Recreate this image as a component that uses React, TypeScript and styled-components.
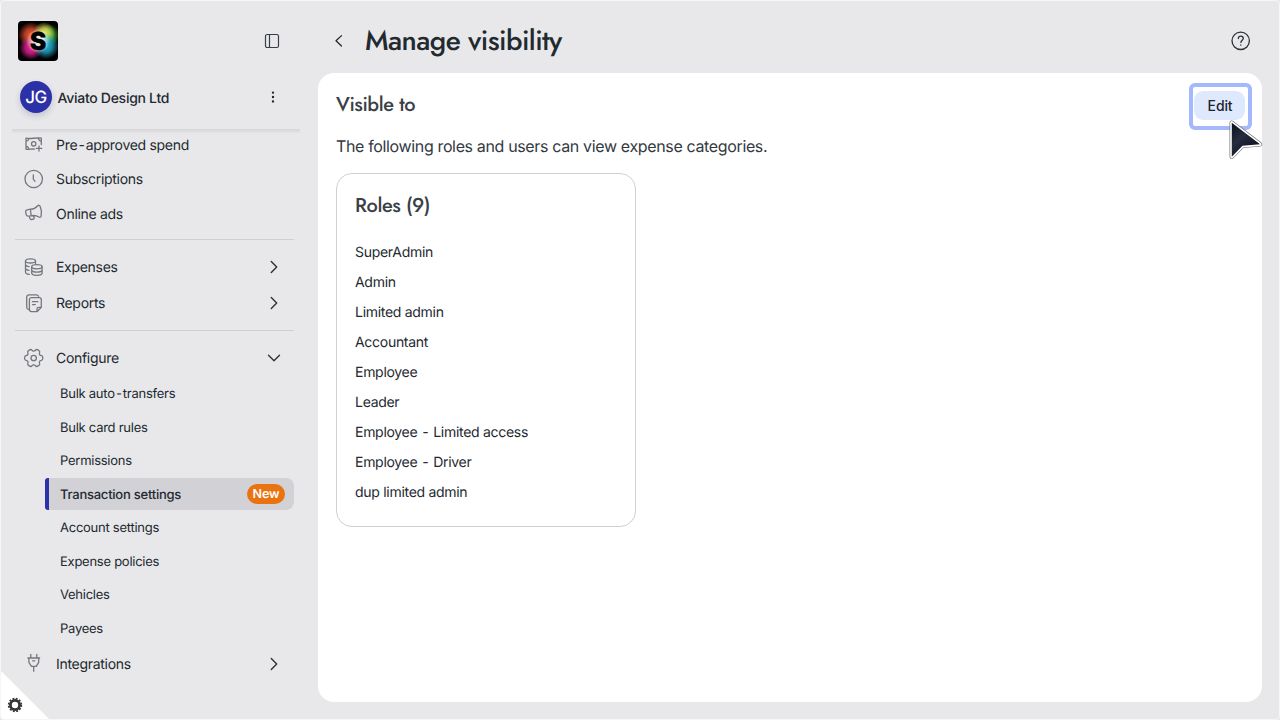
import React from "react";
import styled, { createGlobalStyle, css } from "styled-components";

const Global = createGlobalStyle`
  * { box-sizing: border-box; }
  body {
    margin: 0;
    background: #e8e8ea;
    color: #22292f;
    font-family: Inter, "Liberation Sans", sans-serif;
    text-rendering: geometricPrecision;
  }
`;

const Page = styled.div`
  position: relative;
  display: flex;
  width: 1280px;
  height: 720px;
  overflow: hidden;
  background: #e8e8ea;
  border: 1px solid #f6f6f7;
  border-radius: 4px;
`;

const Sidebar = styled.aside`
  width: 317px;
  display: flex;
  flex-direction: column;
`;

const Brand = styled.div`
  display: flex;
  justify-content: space-between;
  align-items: center;
  height: 40px;
  margin: 20px 38px 0 17px;
`;

const Logo = styled.svg`
  display: block;
  width: 40px;
  height: 40px;
  border-radius: 4px;
`;

const LogoLetter = styled.text`
  font-family: Inter, sans-serif;
  font-weight: 900;
  font-size: 25px;
`;

const Account = styled.div`
  display: flex;
  align-items: center;
  height: 32px;
  margin: 20px 38px 14.5px 19px;
`;

const Avatar = styled.div`
  width: 32px;
  height: 32px;
  padding-top: 1px;
  border-radius: 50%;
  background: #2c31a8;
  color: #fff;
  display: flex;
  align-items: center;
  justify-content: center;
  font-size: 17px;
  font-weight: 500;
  letter-spacing: -0.4px;
  box-shadow: 0 3px 6px rgba(40, 45, 90, 0.2);
`;

const AccountName = styled.div`
  flex: 1;
  margin: 4px 0 0 5.5px;
  font-size: 14px;
  font-weight: 500;
  line-height: 20px;
  letter-spacing: -0.28px;
`;

const Nav = styled.nav`
  position: relative;
  flex: 1;
`;

const ScrollShadow = styled.div`
  position: absolute;
  top: 1px;
  left: 11px;
  width: 288px;
  height: 4px;
  background: linear-gradient(#d8d8da, #dcdcde 50%, #e5e5e7);
`;

const Row = styled.div<{ $h?: number }>`
  display: flex;
  align-items: center;
  height: ${(p) => p.$h ?? 36}px;
  padding: 0 36px 0 22px;
`;

const RowLabel = styled.span`
  flex: 1;
  margin-left: 12px;
  padding-top: 2px;
  font-size: 14px;
  line-height: 20px;
  letter-spacing: -0.3px;
  white-space: nowrap;
`;

const Divider = styled.div<{ $above: number }>`
  height: 1px;
  margin: ${(p) => p.$above}px 24px 9px 14px;
  background: #cfcfd2;
`;

const SubList = styled.div`
  display: flex;
  flex-direction: column;
  gap: 1.5px;
  padding: 1px 0 2px;
`;

const Sub = styled.div<{ $active?: boolean }>`
  display: flex;
  align-items: center;
  justify-content: space-between;
  height: 32px;
  margin: 0 24px 0 44px;
  padding: 0 9px 0 11px;
  border-left: 4px solid transparent;
  border-radius: 3px 8px 8px 3px;
  font-size: 13px;
  letter-spacing: -0.26px;
  white-space: nowrap;
  ${(p) =>
    p.$active &&
    css`
      background: #d2d1d6;
      border-left-color: #2c31a8;
      font-weight: 500;
      letter-spacing: -0.24px;
    `}
`;

const SubLabel = styled.span`
  padding-top: 2px;
`;

const Badge = styled.span`
  width: 38px;
  height: 20px;
  border-radius: 10px;
  background: #e8730f;
  color: #fff;
  font-size: 12.5px;
  font-weight: 600;
  letter-spacing: -0.1px;
  line-height: 21px;
  text-align: center;
`;

const Dash = styled.span`
  padding: 0 1.2px;
`;

const Icon = styled.svg<{ $c?: string; $w?: number; $up?: number }>`
  display: block;
  flex: none;
  fill: none;
  stroke: ${(p) => p.$c ?? "#73777e"};
  stroke-width: ${(p) => p.$w ?? 1.3};
  stroke-linecap: round;
  stroke-linejoin: round;
  margin-bottom: ${(p) => (p.$up ?? 0) * 2}px;
`;

const Main = styled.main`
  width: 944px;
  display: flex;
  flex-direction: column;
`;

const TitleBar = styled.header`
  display: flex;
  align-items: center;
  height: 72px;
  padding: 8px 11px 0 11px;
`;

const Title = styled.h1`
  flex: 1;
  margin: 0 0 0 16px;
  font-family: Jost, Lato, sans-serif;
  font-size: 28px;
  line-height: 40px;
  font-weight: 500;
  letter-spacing: -0.56px;
`;

const Card = styled.section`
  height: 629px;
  padding: 10px 18px;
  background: #fff;
  border-radius: 16px;
`;

const CardHeader = styled.div`
  display: flex;
  justify-content: space-between;
  height: 47px;
  margin-right: -8px;
`;

const Heading = styled.h2`
  margin: 0;
  font-family: Jost, Lato, sans-serif;
  font-size: 20px;
  line-height: 24px;
  font-weight: 500;
  color: #3b3f46;
  letter-spacing: -0.4px;
`;

const CardHeading = styled(Heading)`
  margin-top: 10px;
`;

const FocusRing = styled.div`
  width: 63px;
  height: 47px;
  padding: 4px 2px 6px 1px;
  border: 4px solid #a4b9fd;
  border-radius: 6px;
`;

const EditButton = styled.button`
  display: block;
  width: 51px;
  height: 29px;
  padding: 0 0 0 1px;
  border: 0;
  border-radius: 9px;
  background: #dfe9fe;
  color: #1d242b;
  font: 500 14px/29px Inter, sans-serif;
  letter-spacing: -0.15px;
`;

const Intro = styled.p`
  margin: 4px 0 15px;
  font-size: 16px;
  line-height: 24px;
  letter-spacing: -0.355px;
  color: #33393f;
  white-space: nowrap;
`;

const RolesCard = styled.div`
  width: 300px;
  height: 354px;
  padding: 20px 18px;
  border: 1px solid #d0d0d2;
  border-radius: 16px;
`;

const RoleList = styled.ul`
  list-style: none;
  margin: 20px 0 0;
  padding: 0;
`;

const Role = styled.li`
  font-size: 14px;
  line-height: 30px;
  letter-spacing: -0.29px;
`;

const Corner = styled.svg`
  position: absolute;
  left: 0;
  bottom: 0;
`;

const Pointer = styled.svg`
  position: absolute;
  left: 1223px;
  top: 113px;
`;

const Dashed = ({ text }: { text: string }) => (
  <>
    {text.split("-").map((part, i) => (
      <React.Fragment key={i}>
        {i > 0 && <Dash>-</Dash>}
        {part}
      </React.Fragment>
    ))}
  </>
);

const Chevron = ({ down }: { down?: boolean }) => (
  <Icon width="16" height="16" viewBox="0 0 16 16" $c="#2b3238" $w={1.4}>
    <path d={down ? "M2.500 5.300 8 10.700l5.500-5.400" : "M5.300 2.500 10.700 8l-5.400 5.500"} />
  </Icon>
);

const MoneyIcon = () => (
  <Icon width="21" height="20" viewBox="0 0 21 20" $up={1}>
    <path d="M11.500 15.200C8.500 14.400 6.500 15.900 3 15.200V4.200c5 1.100 10-1 15.300 0v6.300M3 7.200c1.500 0 2.500-.8 2.700-2.200M15.500 4.500c.2 1.600 1.200 2.500 2.700 2.600M3 12.400c1.500 0 2.500.9 2.700 2.400M16 11.800v5.200M13.300 14.400h5.500" />
    <circle cx="10.700" cy="9.800" r="2.200" />
  </Icon>
);

const ClockIcon = () => (
  <Icon width="21" height="20" viewBox="0 0 21 20">
    <circle cx="10.700" cy="10" r="8.700" />
    <path d="M10.300 6v4.200l1.700 2.200" />
  </Icon>
);

const MegaphoneIcon = () => (
  <Icon width="21" height="20" viewBox="0 0 21 20" $up={1}>
    <path d="M7.500 6.200C11 6 13 4.700 14.800 2.700c.8-.8 1.800-.5 2.300.6 1.400 3 1.700 6.600 1 9.800-.2 1.200-1.200 1.600-2.200.9-2.200-1.400-4.600-1.900-8-1.200L5 13.100c-1 0-1.500-.5-1.800-1.500L2.700 9c-.2-1 .3-1.900 1.500-2.100zM7.500 6.200l.6 6.500M6.200 13.100l.8 2.500c.2.7.8 1 1.500.9l1.800-.3c.8-.1 1.100-.7.800-1.500l-.8-2" />
  </Icon>
);

const CoinsIcon = () => (
  <Icon width="21" height="20" viewBox="0 0 21 20">
    <ellipse cx="7.500" cy="3.900" rx="5" ry="2.100" />
    <path d="M2.500 4v11c0 1.300 1.500 2.200 3.800 2.400M12.500 4v2.500M2.500 7.700c.3 1.300 1.500 1.800 3.500 2M2.500 11.400c.3 1.200 1.500 1.800 3.500 2" />
    <ellipse cx="13.900" cy="9.800" rx="5.200" ry="2.100" />
    <path d="M8.700 9.800v6.300c0 1.400 2.300 2.300 5.200 2.300s5.200-.9 5.200-2.300V9.800M8.700 13c.3 1.400 2.500 2.100 5.200 2.100s4.900-.7 5.200-2.100" />
  </Icon>
);

const ReportIcon = () => (
  <Icon width="21" height="20" viewBox="0 0 21 20">
    <path d="M5.500 16.300C4.200 16.100 3.700 15.300 3.700 14V4.200c0-1.500.9-2.300 2.300-2.300h7.300c1.100 0 1.900.4 2.300 1.300" />
    <path d="M14 18.700H8.500c-1.300 0-2.100-.8-2.100-2.100V6.700c0-1.300.8-2.100 2.100-2.100h7.700c1.300 0 2.100.8 2.100 2.100v7.700zM14 18.700v-2.600c0-1.200.6-1.700 1.700-1.700h2.600M9.500 8.700h5.400M9.500 11.600h2.800" />
  </Icon>
);

const gearOutline = () => {
  const pts: number[][] = [];
  for (let tooth = 0; tooth < 6; tooth++) {
    [[-21, 6.9], [-14, 9.4], [14, 9.4], [21, 6.9]].forEach(([offset, r]) => {
      const a = ((tooth * 60 + offset) * Math.PI) / 180;
      pts.push([10.7 + r * Math.cos(a), 10 + r * Math.sin(a)]);
    });
  }
  const mid = (i: number) => {
    const p = pts[i % 24];
    const q = pts[(i + 1) % 24];
    return `${((p[0] + q[0]) / 2).toFixed(2)} ${((p[1] + q[1]) / 2).toFixed(2)}`;
  };
  return (
    `M${mid(0)}` +
    pts
      .map((_, i) => {
        const c = pts[(i + 1) % 24];
        return `Q${c[0].toFixed(2)} ${c[1].toFixed(2)} ${mid(i + 1)}`;
      })
      .join("")
  );
};

const GearIcon = () => (
  <Icon width="21" height="20" viewBox="0 0 21 20">
    <circle cx="10.700" cy="10" r="2.700" />
    <path d={gearOutline()} />
  </Icon>
);

const PlugIcon = () => (
  <Icon width="21" height="20" viewBox="0 0 21 20" $up={1}>
    <path d="M7.800 1.300v3.600M13.800 1.300v3.600M4.900 5h11.700M5.900 5v4.300l2.500 4h4.800l2.500-4V5M10.700 13.500v4.700M9.600 7.800h2.200" />
  </Icon>
);

const glows = [
  { id: "green", color: "#3fae35", cx: 31, cy: 14, r: 11 },
  { id: "orange", color: "#f0532f", cx: 13, cy: 14, r: 13 },
  { id: "yellow", color: "#e9e05a", cx: 26, cy: 12, r: 11 },
  { id: "magenta", color: "#e9259c", cx: 13, cy: 27, r: 12 },
  { id: "cyan", color: "#27b4d6", cx: 28, cy: 25, r: 13 },
  { id: "white", color: "#ffffff", cx: 20, cy: 20, r: 12 },
];

const subItems = [
  "Bulk auto-transfers",
  "Bulk card rules",
  "Permissions",
  "Transaction settings",
  "Account settings",
  "Expense policies",
  "Vehicles",
  "Payees",
];

const roles = [
  "SuperAdmin",
  "Admin",
  "Limited admin",
  "Accountant",
  "Employee",
  "Leader",
  "Employee - Limited access",
  "Employee - Driver",
  "dup limited admin",
];

const pointerPath = "M7.800 8.800v34l10.700-11 17.500-1.500z";

export default function App() {
  return (
    <Page>
      <Global />
      <Sidebar>
        <Brand>
          <Logo viewBox="0 0 40 40">
            <defs>
              {glows.map(({ id, color }) => (
                <radialGradient id={id} key={id}>
                  <stop offset="0" stopColor={color} />
                  <stop offset=".45" stopColor={color} stopOpacity=".75" />
                  <stop offset="1" stopColor={color} stopOpacity="0" />
                </radialGradient>
              ))}
            </defs>
            <rect width="40" height="40" fill="#000" />
            {glows.map(({ id, cx, cy, r }) => (
              <circle key={id} cx={cx} cy={cy} r={r} fill={`url(#${id})`} />
            ))}
            <LogoLetter x="20.200" y="29.300" textAnchor="middle">S</LogoLetter>
          </Logo>
          <Icon width="16" height="16" viewBox="0 0 16 16" $c="#383e44" $w={1.2}>
            <rect x="1.500" y="1.500" width="13" height="13" rx="1.800" />
            <path d="M5.500 1.500v13" />
          </Icon>
        </Brand>
        <Account>
          <Avatar>JG</Avatar>
          <AccountName>Aviato Design Ltd</AccountName>
          <Icon width="14" height="16" viewBox="0 0 14 16" $c="#22292f" $w={2.4}>
            <path d="M7 3.600v0M7 8v0M7 12.400v0" />
          </Icon>
        </Account>
        <Nav>
          <ScrollShadow />
          <Row $h={34.5}><MoneyIcon /><RowLabel><Dashed text="Pre-approved spend" /></RowLabel></Row>
          <Row $h={34.5}><ClockIcon /><RowLabel>Subscriptions</RowLabel></Row>
          <Row $h={34.5}><MegaphoneIcon /><RowLabel>Online ads</RowLabel></Row>
          <Divider $above={8} />
          <Row><CoinsIcon /><RowLabel>Expenses</RowLabel><Chevron /></Row>
          <Row><ReportIcon /><RowLabel>Reports</RowLabel><Chevron /></Row>
          <Divider $above={9} />
          <Row><GearIcon /><RowLabel>Configure</RowLabel><Chevron down /></Row>
          <SubList>
            {subItems.map((item) => {
              const active = item === "Transaction settings";
              return (
                <Sub key={item} $active={active}>
                  <SubLabel><Dashed text={item} /></SubLabel>
                  {active && <Badge>New</Badge>}
                </Sub>
              );
            })}
          </SubList>
          <Row><PlugIcon /><RowLabel>Integrations</RowLabel><Chevron /></Row>
        </Nav>
      </Sidebar>
      <Main>
        <TitleBar>
          <Icon width="20" height="20" viewBox="0 0 20 20" $c="#22292f" $w={1.3}>
            <path d="m12.500 4.600-5.500 5.200 5.500 5.200" />
          </Icon>
          <Title>Manage visibility</Title>
          <Icon width="20" height="20" viewBox="0 0 20 20" $c="#2b3238" $w={1.3}>
            <circle cx="9.700" cy="9.800" r="8.700" />
            <path d="M7.300 7.600c0-1.500 1.100-2.500 2.500-2.500s2.500 1 2.500 2.300c0 1.700-2.400 1.900-2.400 4M9.800 14v.2" />
          </Icon>
        </TitleBar>
        <Card>
          <CardHeader>
            <CardHeading>Visible to</CardHeading>
            <FocusRing><EditButton>Edit</EditButton></FocusRing>
          </CardHeader>
          <Intro>The following roles and users can view expense categories.</Intro>
          <RolesCard>
            <Heading>Roles (9)</Heading>
            <RoleList>
              {roles.map((role) => (
                <Role key={role}><Dashed text={role} /></Role>
              ))}
            </RoleList>
          </RolesCard>
        </Card>
      </Main>
      <Corner width="48" height="48" viewBox="0 0 48 48">
        <path d="M0 0 48 48H0z" fill="#fff" />
        <circle cx="14" cy="34" r="4.600" fill="none" stroke="#333" strokeWidth="2.800" />
        <circle cx="14" cy="34" r="6.400" fill="none" stroke="#333" strokeWidth="1.600" strokeDasharray="1.900 1.451" />
      </Corner>
      <Pointer width="44" height="48" viewBox="0 0 44 48">
        <defs>
          <linearGradient id="pointerFill" x1="0" y1="0" x2=".7" y2="1">
            <stop offset="0" stopColor="#0b0f1a" />
            <stop offset=".45" stopColor="#262d40" />
            <stop offset="1" stopColor="#080b14" />
          </linearGradient>
        </defs>
        <path d={pointerPath} fill="none" stroke="#6a6a6e" strokeWidth="4.500" strokeLinejoin="round" />
        <path d={pointerPath} fill="none" stroke="#fff" strokeWidth="3.200" strokeLinejoin="round" />
        <path d={pointerPath} fill="url(#pointerFill)" />
      </Pointer>
    </Page>
  );
}
